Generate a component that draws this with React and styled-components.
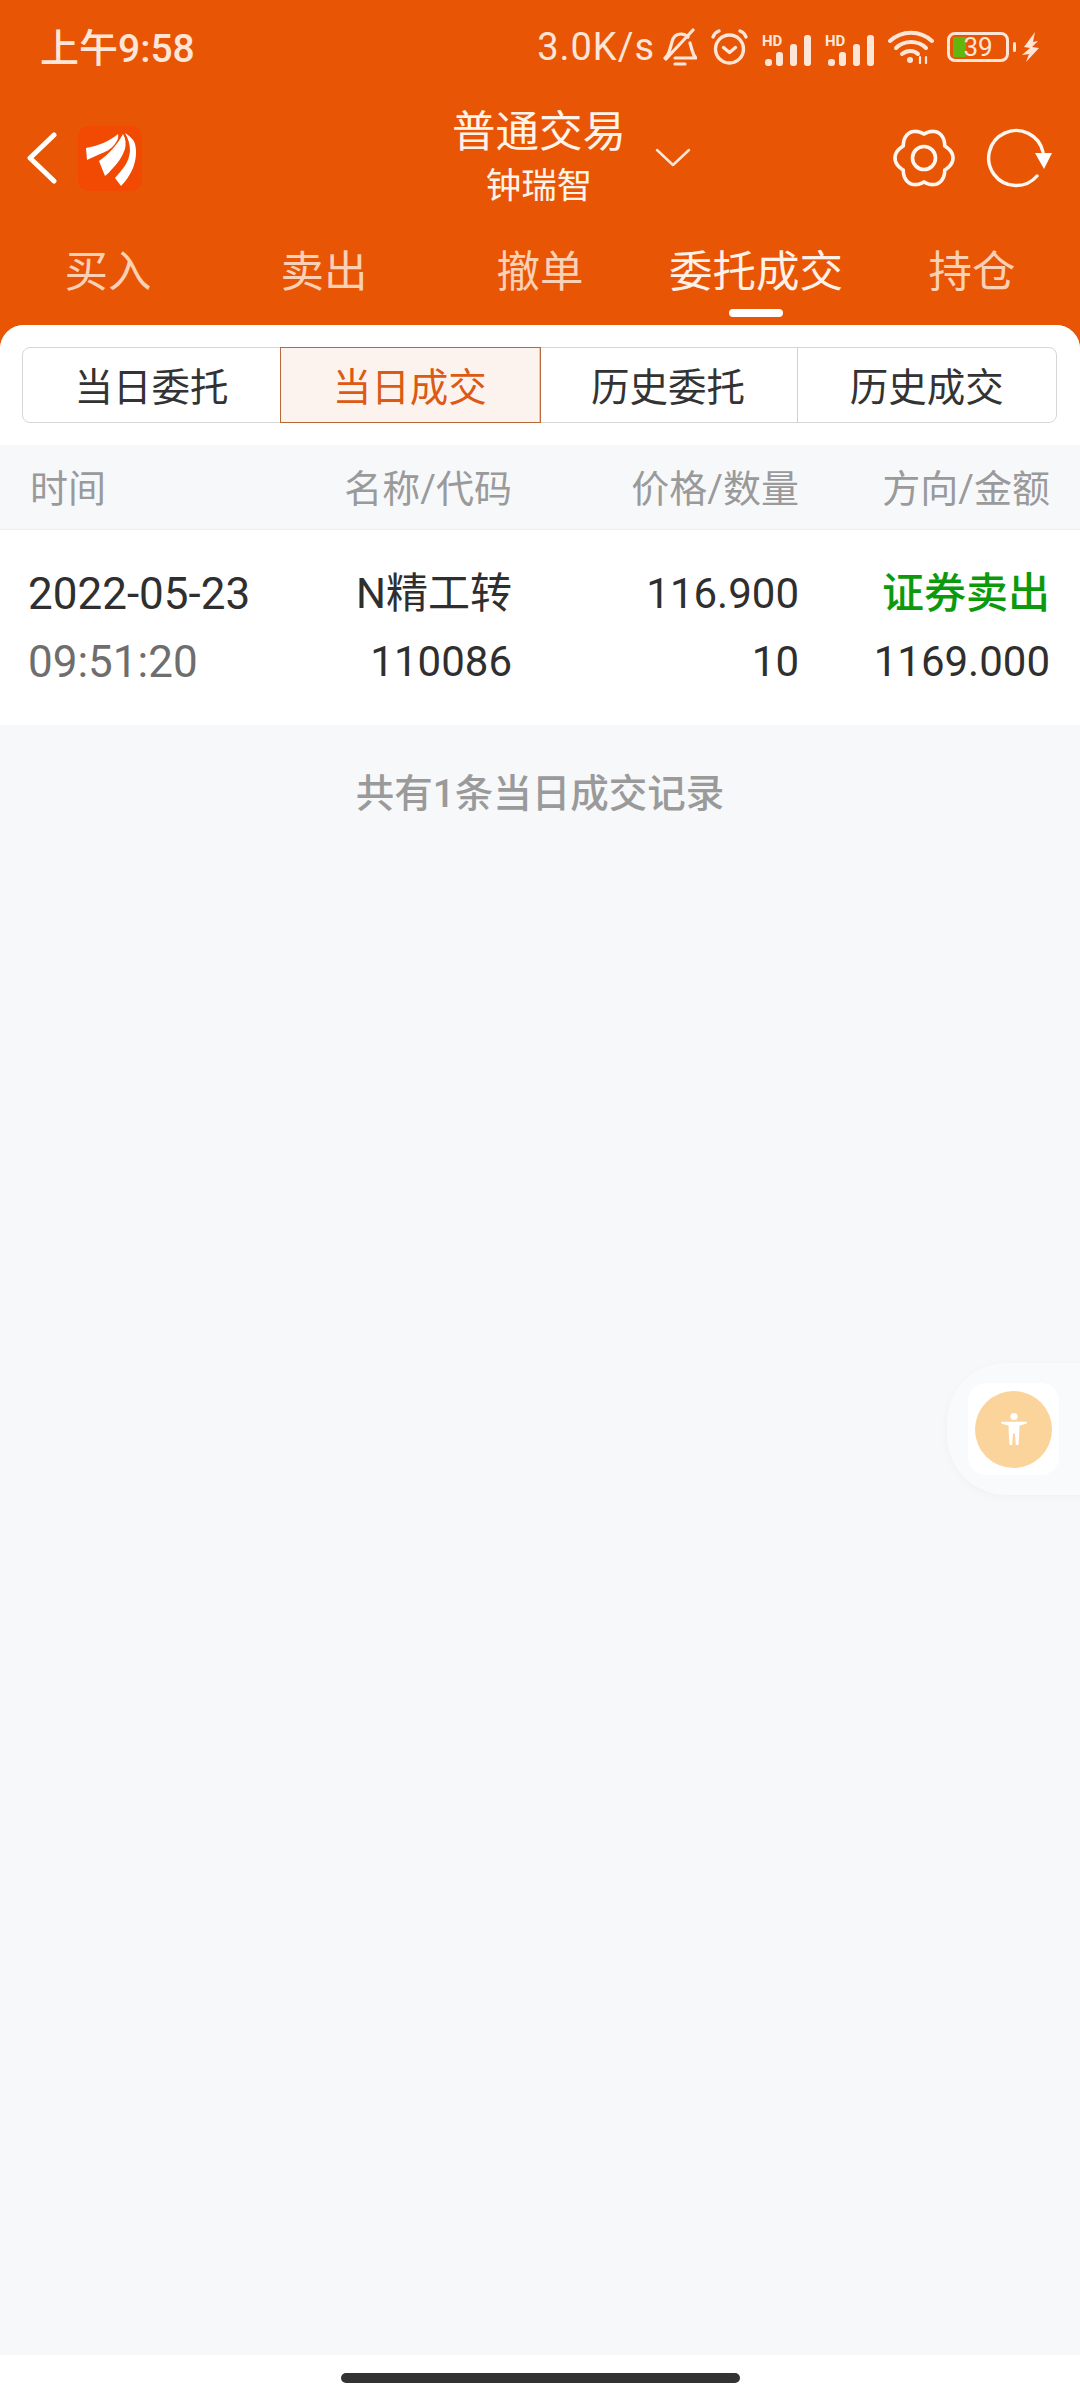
import React from "react";
import styled, { createGlobalStyle } from "styled-components";

const ORANGE = "#e85605";
const CJK = `Roboto, "Noto Sans CJK SC", sans-serif`;

const GlobalStyle = createGlobalStyle`
  html, body {
    margin: 0;
    padding: 0;
    background: #f7f8fa;
    font-family: ${CJK};
  }
  * {
    box-sizing: border-box;
  }
`;

const tabs = ["买入", "卖出", "撤单", "委托成交", "持仓"];
const segments = ["当日委托", "当日成交", "历史委托", "历史成交"];

function gearPath(cx, cy, lobes, outer, inner) {
  const steps = 180;
  let d = "";
  for (let i = 0; i <= steps; i++) {
    const a = (i / steps) * Math.PI * 2;
    const wave = Math.pow((1 + Math.cos(a * lobes)) / 2, 0.55);
    const r = inner + (outer - inner) * wave;
    const x = cx + r * Math.cos(a);
    const y = cy + r * Math.sin(a);
    d += `${i === 0 ? "M" : "L"}${x.toFixed(2)} ${y.toFixed(2)}`;
  }
  return d + "Z";
}

const BellOff = () => (
  <svg width="34" height="38" viewBox="0 0 34 38" fill="none" stroke="#fde6d8" strokeWidth="3.2" strokeLinecap="round" strokeLinejoin="round">
    <path d="M2 30c3-2 4-5 5-9l2-7c1-5 4-8 9-8 3 0 5 1 7 3" />
    <path d="M27 15l2 7c1 4 2 6 4 8H12" />
    <path d="M3 31L30 2" />
    <path d="M12 36h10" />
  </svg>
);

const Alarm = () => (
  <svg width="39" height="38" viewBox="0 0 39 38" fill="none" stroke="#fde6d8" strokeWidth="3.4" strokeLinecap="round" strokeLinejoin="round">
    <circle cx="19.5" cy="21" r="14" />
    <path d="M13.5 19.5l6 5 6-5" />
    <path d="M3 9c1-3 3-5 6-6" />
    <path d="M36 9c-1-3-3-5-6-6" />
  </svg>
);

const Signal = () => (
  <svg width="50" height="38" viewBox="0 0 50 38" fill="#fde6d8">
    <text x="0" y="18" fontFamily="Roboto, sans-serif" fontSize="15" fontWeight="700">HD</text>
    <rect x="3" y="31" width="7" height="7" rx="3" />
    <rect x="14" y="24" width="7" height="14" rx="3" />
    <rect x="28" y="16" width="7" height="22" rx="3" />
    <rect x="42" y="7" width="7" height="31" rx="3" />
  </svg>
);

const Wifi = () => (
  <svg width="46" height="34" viewBox="0 0 46 34" fill="none" stroke="#fde6d8" strokeWidth="4" strokeLinecap="round">
    <path d="M2 11c12-11 30-11 42 0" />
    <path d="M8 18c8-8 22-8 30 0" />
    <path d="M14 24c5-4 12-4 16 0" />
    <circle cx="22" cy="30" r="3" fill="#fde6d8" stroke="none" />
    <path d="M32 33v-6M38 33v-6" strokeWidth="2.2" />
  </svg>
);

const Bolt = () => (
  <svg width="18" height="30" viewBox="0 0 18 30" fill="#fde6d8">
    <path d="M13 0L2 15l6 1-8 7 7-1-3 8 13-14-7-1 6-6-5 1z" />
  </svg>
);

const Logo = () => (
  <svg width="64" height="65" viewBox="0 0 64 65">
    <rect width="64" height="65" rx="10" fill="#f24a02" />
    <g fill="#fff">
      <path d="M8 22C20 20 32 15 40 8c1 4-1 7-3 10-4 5-9 8-15 10-4 2-9 4-13 6z" />
      <path d="M21 35C31 28 39 19 45 8c3 5 3 10 2 15-3 8-7 14-12 19-3 3-5 6-8 8z" />
      <path d="M37 52c7-8 14-15 15-27 0-7-2-13-5-18 5 3 9 7 10 11 2 8 1 16-2 24-3 7-7 13-12 18z" />
    </g>
  </svg>
);

const Back = () => (
  <svg width="32" height="52" viewBox="0 0 32 52" fill="none" stroke="#fff" strokeWidth="5" strokeLinecap="round" strokeLinejoin="round">
    <path d="M28 3L4 26l24 23" />
  </svg>
);

const Chevron = () => (
  <svg width="36" height="22" viewBox="0 0 36 22" fill="none" stroke="#fde6d8" strokeWidth="2.5" strokeLinecap="round" strokeLinejoin="round">
    <path d="M2 3l16 15L34 3" />
  </svg>
);

const Gear = () => (
  <svg width="62" height="62" viewBox="0 0 62 62" fill="none" stroke="#fff6f0" strokeWidth="3.6" strokeLinejoin="round">
    <path d={gearPath(31, 31, 6, 29, 24)} />
    <circle cx="31" cy="31" r="11.5" />
  </svg>
);

const Refresh = () => (
  <svg width="70" height="62" viewBox="0 0 70 62" fill="none">
    <path d="M52 49A27.5 27.5 0 1 1 58 25" stroke="#fff6f0" strokeWidth="3.4" strokeLinecap="round" />
    <path d="M50 26h17l-8 16z" fill="#fff" />
  </svg>
);

const Person = () => (
  <svg width="28" height="34" viewBox="0 0 30 38" fill="#fff">
    <circle cx="15" cy="5" r="4" />
    <path d="M1 11h28v2l-8 2v8l-1 14h-3l-1-13h-2l-1 13h-3L9 23v-8l-8-2z" />
  </svg>
);

const App = () => {
  return (
    <Screen>
      <GlobalStyle />
      <TopArea>
        <StatusBar>
          <Clock>上午9:58</Clock>
          <StatusIcons>
            <Speed>3.0K/s</Speed>
            <BellOff />
            <Alarm />
            <Signal />
            <Signal />
            <Wifi />
            <Battery>
              <BatteryFill />
              <BatteryText>39</BatteryText>
            </Battery>
            <Bolt />
          </StatusIcons>
        </StatusBar>
        <NavBar>
          <NavLeft>
            <Back />
            <Logo />
          </NavLeft>
          <TitleBlock>
            <TitleText>
              <Title>普通交易</Title>
              <SubTitle>钟瑞智</SubTitle>
            </TitleText>
            <Chevron />
          </TitleBlock>
          <NavRight>
            <Gear />
            <Refresh />
          </NavRight>
        </NavBar>
        <TabBar>
          {tabs.map((tab) => (
            <Tab key={tab} $active={tab === "委托成交"}>
              {tab}
            </Tab>
          ))}
        </TabBar>
      </TopArea>

      <Panel>
        <SegmentWrap>
          <Segments>
            {segments.map((seg) => (
              <Segment key={seg} $active={seg === "当日成交"}>
                {seg}
              </Segment>
            ))}
          </Segments>
        </SegmentWrap>

        <HeadRow>
          <HeadCell>时间</HeadCell>
          <HeadCell $right>名称/代码</HeadCell>
          <HeadCell $right>价格/数量</HeadCell>
          <HeadCell $right>方向/金额</HeadCell>
        </HeadRow>

        <DataRow>
          <Cell>
            <Line $date>2022-05-23</Line>
            <Line $date $muted>09:51:20</Line>
          </Cell>
          <Cell $right>
            <Line>N精工转</Line>
            <Line>110086</Line>
          </Cell>
          <Cell $right>
            <Line>116.900</Line>
            <Line>10</Line>
          </Cell>
          <Cell $right>
            <Line $green>证券卖出</Line>
            <Line>1169.000</Line>
          </Cell>
        </DataRow>

        <Footer>共有1条当日成交记录</Footer>
      </Panel>

      <HomeBar>
        <HomePill />
      </HomeBar>

      <FloatDock>
        <FloatSquare>
          <FloatCircle>
            <Person />
          </FloatCircle>
        </FloatSquare>
      </FloatDock>
    </Screen>
  );
};

export default App;

const Screen = styled.div`
  position: relative;
  width: 1080px;
  height: 2400px;
  display: flex;
  flex-direction: column;
  overflow: hidden;
  background: ${ORANGE};
`;

const TopArea = styled.div`
  height: 325px;
  flex: none;
  display: flex;
  flex-direction: column;
`;

const StatusBar = styled.div`
  height: 94px;
  padding: 0 40px;
  display: flex;
  align-items: center;
  justify-content: space-between;
  color: #fde6d8;
`;

const Clock = styled.span`
  font-size: 39px;
  font-weight: 500;
  padding-bottom: 5px;
`;

const StatusIcons = styled.div`
  display: flex;
  align-items: center;
  gap: 13px;
`;

const Speed = styled.span`
  font-size: 38px;
  letter-spacing: 1px;
  margin-right: -5px;
`;

const Battery = styled.div`
  position: relative;
  width: 62px;
  height: 30px;
  border: 3px solid #fde6d8;
  border-radius: 8px;
  display: flex;
  align-items: center;
  justify-content: center;
  &::after {
    content: "";
    position: absolute;
    right: -10px;
    top: 7px;
    width: 3px;
    height: 10px;
    background: #fde6d8;
    border-radius: 2px;
  }
`;

const BatteryFill = styled.div`
  position: absolute;
  left: 3px;
  top: 2px;
  bottom: 2px;
  width: 13px;
  background: #62b60e;
`;

const BatteryText = styled.span`
  position: relative;
  font-size: 26px;
  line-height: 24px;
  color: #fde6d8;
`;

const NavBar = styled.div`
  height: 128px;
  padding: 0 25px 0 26px;
  display: flex;
  align-items: center;
`;

const NavLeft = styled.div`
  width: 427px;
  display: flex;
  align-items: center;
  gap: 20px;
`;

const TitleBlock = styled.div`
  display: flex;
  align-items: center;
  gap: 30px;
`;

const TitleText = styled.div`
  width: 172px;
  display: flex;
  flex-direction: column;
  align-items: center;
`;

const Title = styled.div`
  font-size: 43.5px;
  line-height: 56px;
  white-space: nowrap;
  color: #fff3ea;
`;

const SubTitle = styled.div`
  font-size: 35.5px;
  line-height: 50px;
  white-space: nowrap;
  color: #fff3ea;
`;

const NavRight = styled.div`
  flex: 1;
  display: flex;
  align-items: center;
  justify-content: flex-end;
  gap: 30px;
`;

const TabBar = styled.div`
  flex: 1;
  display: flex;
`;

const Tab = styled.div`
  position: relative;
  flex: 1;
  display: flex;
  justify-content: center;
  padding-top: 23px;
  font-size: 43.5px;
  line-height: 56px;
  color: ${(p) => (p.$active ? "#fff1e8" : "#fbd0b5")};
  &::after {
    content: "";
    display: ${(p) => (p.$active ? "block" : "none")};
    position: absolute;
    left: 50%;
    bottom: 8px;
    width: 54px;
    height: 8px;
    margin-left: -27px;
    border-radius: 4px;
    background: #fff;
  }
`;

const Panel = styled.div`
  flex: 1;
  display: flex;
  flex-direction: column;
  background: #f7f8fa;
  border-radius: 24px 24px 0 0;
  overflow: hidden;
`;

const SegmentWrap = styled.div`
  height: 120px;
  padding: 22px 23px 22px 22px;
  background: #fff;
`;

const Segments = styled.div`
  height: 76px;
  display: grid;
  grid-template-columns: repeat(4, 1fr);
  border: 1px solid #d6d6d6;
  border-radius: 8px;
`;

const Segment = styled.div`
  display: flex;
  align-items: center;
  justify-content: center;
  padding-bottom: 2px;
  font-size: 38.5px;
  color: ${(p) => (p.$active ? "#dc5a14" : "#333")};
  background: ${(p) => (p.$active ? "#fdf3ee" : "transparent")};
  border-right: 1px solid #d0d0d0;
  outline: ${(p) => (p.$active ? "1px solid #b9683a" : "none")};
  &:last-child {
    border-right: none;
  }
`;

const HeadRow = styled.div`
  height: 85px;
  padding: 0 0 4px 30px;
  display: grid;
  grid-template-columns: 208px 274px 287px 251px;
  align-items: center;
  border-bottom: 1px solid #eceef0;
`;

const HeadCell = styled.div`
  font-size: 38px;
  color: #9a9a9a;
  text-align: ${(p) => (p.$right ? "right" : "left")};
`;

const DataRow = styled.div`
  height: 195px;
  padding-left: 28px;
  display: grid;
  grid-template-columns: 210px 274px 287px 251px;
  align-items: center;
  background: #fff;
`;

const Cell = styled.div`
  display: flex;
  flex-direction: column;
  gap: 14px;
  text-align: ${(p) => (p.$right ? "right" : "left")};
`;

const Line = styled.div`
  font-size: ${(p) => (p.$date ? "44px" : "42px")};
  line-height: 54px;
  white-space: nowrap;
  color: ${(p) => (p.$green ? "#0c9a0c" : p.$muted ? "#6e6e6e" : "#2f2f2f")};
  font-weight: ${(p) => (p.$green ? 500 : 400)};
`;

const Footer = styled.div`
  padding-top: 44px;
  text-align: center;
  font-size: 38.5px;
  line-height: 50px;
  font-weight: 500;
  color: #9a9a9a;
`;

const HomeBar = styled.div`
  height: 45px;
  flex: none;
  display: flex;
  justify-content: center;
  padding-top: 18px;
  background: #fff;
`;

const HomePill = styled.div`
  width: 399px;
  height: 10px;
  border-radius: 5px;
  background: #333;
`;

const FloatDock = styled.div`
  position: absolute;
  left: 947px;
  top: 1363px;
  width: 200px;
  height: 132px;
  padding: 20px 0 0 21px;
  border-radius: 60px;
  background: #f9fafb;
  box-shadow: 0 2px 10px rgba(0, 0, 0, 0.03);
`;

const FloatSquare = styled.div`
  width: 91px;
  height: 92px;
  border-radius: 18px;
  background: #fff;
  display: flex;
  align-items: center;
  justify-content: center;
`;

const FloatCircle = styled.div`
  width: 77px;
  height: 77px;
  border-radius: 50%;
  background: #fbd49b;
  display: flex;
  align-items: center;
  justify-content: center;
`;
